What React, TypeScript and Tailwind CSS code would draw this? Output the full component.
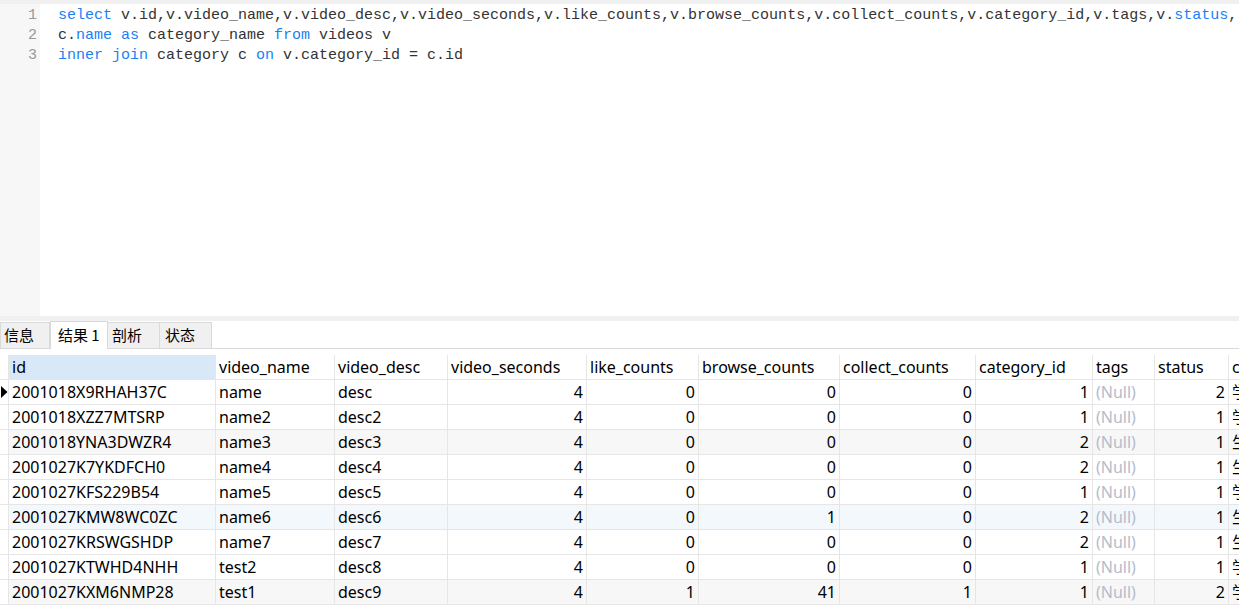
import React from 'react'

type Row = {
  id: string
  name: string
  desc: string
  seconds: number
  likes: number
  browse: number
  collect: number
  category: number
  status: number
  cname: string
  bg: string
}

const rows: Row[] = [
  { id: '2001018X9RHAH37C', name: 'name', desc: 'desc', seconds: 4, likes: 0, browse: 0, collect: 0, category: 1, status: 2, cname: '学习', bg: 'bg-white' },
  { id: '2001018XZZ7MTSRP', name: 'name2', desc: 'desc2', seconds: 4, likes: 0, browse: 0, collect: 0, category: 1, status: 1, cname: '学习', bg: 'bg-white' },
  { id: '2001018YNA3DWZR4', name: 'name3', desc: 'desc3', seconds: 4, likes: 0, browse: 0, collect: 0, category: 2, status: 1, cname: '生活', bg: 'bg-[#f7f7f7]' },
  { id: '2001027K7YKDFCH0', name: 'name4', desc: 'desc4', seconds: 4, likes: 0, browse: 0, collect: 0, category: 2, status: 1, cname: '生活', bg: 'bg-white' },
  { id: '2001027KFS229B54', name: 'name5', desc: 'desc5', seconds: 4, likes: 0, browse: 0, collect: 0, category: 1, status: 1, cname: '学习', bg: 'bg-white' },
  { id: '2001027KMW8WC0ZC', name: 'name6', desc: 'desc6', seconds: 4, likes: 0, browse: 1, collect: 0, category: 2, status: 1, cname: '生活', bg: 'bg-[#f3f8fd]' },
  { id: '2001027KRSWGSHDP', name: 'name7', desc: 'desc7', seconds: 4, likes: 0, browse: 0, collect: 0, category: 2, status: 1, cname: '生活', bg: 'bg-white' },
  { id: '2001027KTWHD4NHH', name: 'test2', desc: 'desc8', seconds: 4, likes: 0, browse: 0, collect: 0, category: 1, status: 1, cname: '学习', bg: 'bg-white' },
  { id: '2001027KXM6NMP28', name: 'test1', desc: 'desc9', seconds: 4, likes: 1, browse: 41, collect: 1, category: 1, status: 2, cname: '学习', bg: 'bg-[#f7f7f7]' },
]

const cell = 'h-full shrink-0 border-r border-[#e6e6e6] px-[3px] flex items-center overflow-hidden whitespace-nowrap'
const num = cell + ' justify-end'
const gutter = 'h-full w-[9px] shrink-0 border-r border-[#e6e6e6] flex items-center justify-start bg-white'

function Kw({ children }: { children: React.ReactNode }) {
  return <span className="text-[#1a7ff5]">{children}</span>
}

export default function App() {
  return (
    <div className="w-[1239px] h-[614px] overflow-hidden bg-white text-black">
      <div className="h-[4px] bg-[#f0f0f0]" />

      {/* editor */}
      <div className="h-[312px] flex font-['Liberation_Mono',monospace] text-[15px] leading-[20px]">
        <div className="w-[40px] shrink-0 bg-[#f7f7f7] pt-[2px] pr-[3px] text-right text-[#999]">
          <div>1</div>
          <div>2</div>
          <div>3</div>
        </div>
        <div className="flex-1 pt-[2px] pl-[18px] text-[#333] whitespace-pre overflow-hidden">
          <div>
            <Kw>select</Kw> v.id,v.video_name,v.video_desc,v.video_seconds,v.like_counts,v.browse_counts,v.collect_counts,v.category_id,v.tags,v.<Kw>status</Kw>,
          </div>
          <div>
            c.<Kw>name</Kw> <Kw>as</Kw> category_name <Kw>from</Kw> videos v
          </div>
          <div>
            <Kw>inner</Kw> <Kw>join</Kw> category c <Kw>on</Kw> v.category_id = c.id
          </div>
        </div>
      </div>

      <div className="h-[5px] bg-[#f0f0f0]" />

      {/* tabs */}
      <div className="h-[28px] flex items-end border-b border-[#d9d9d9] font-['Noto_Sans_CJK_SC',sans-serif] text-[15px]">
        <div className="h-[26px] w-[50px] bg-[#f0f0f0] border border-b-0 border-[#d9d9d9] flex items-center pl-[3px]">信息</div>
        <div className="h-[28px] w-[58px] bg-white border border-b-0 border-[#d9d9d9] flex items-center pl-[7px] -mb-px">结果 1</div>
        <div className="h-[26px] w-[52px] bg-[#f0f0f0] border border-b-0 border-l-0 border-[#d9d9d9] flex items-center pl-[4px]">剖析</div>
        <div className="h-[26px] w-[52px] bg-[#f0f0f0] border border-b-0 border-l-0 border-[#d9d9d9] flex items-center pl-[5px]">状态</div>
      </div>

      <div className="h-[6px]" />

      {/* grid */}
      <div className="font-['Noto_Sans','Noto_Sans_CJK_SC',sans-serif] text-[16px]">
        <div className="h-[25px] flex border-b border-[#e6e6e6]">
          <div className={gutter} />
          <div className={cell + ' w-[207px] bg-[#d9e8f6]'}>id</div>
          <div className={cell + ' w-[119px]'}>video_name</div>
          <div className={cell + ' w-[113px]'}>video_desc</div>
          <div className={cell + ' w-[139px]'}>video_seconds</div>
          <div className={cell + ' w-[112px]'}>like_counts</div>
          <div className={cell + ' w-[141px]'}>browse_counts</div>
          <div className={cell + ' w-[136px]'}>collect_counts</div>
          <div className={cell + ' w-[117px]'}>category_id</div>
          <div className={cell + ' w-[62px]'}>tags</div>
          <div className={cell + ' w-[74px]'}>status</div>
          <div className={cell + ' w-[120px]'}>category_name</div>
        </div>
        {rows.map((r, i) => (
          <div key={r.id} className={'h-[25px] flex border-b border-[#e6e6e6] ' + r.bg}>
            <div className={gutter}>
              {i === 0 && (
                <svg width="7" height="12" viewBox="0 0 7 12" className="ml-[1px] shrink-0">
                  <path d="M0 0 L6.5 6 L0 12 Z" fill="#000" />
                </svg>
              )}
            </div>
            <div className={cell + ' w-[207px]'}>{r.id}</div>
            <div className={cell + ' w-[119px]'}>{r.name}</div>
            <div className={cell + ' w-[113px]'}>{r.desc}</div>
            <div className={num + ' w-[139px]'}>{r.seconds}</div>
            <div className={num + ' w-[112px]'}>{r.likes}</div>
            <div className={num + ' w-[141px]'}>{r.browse}</div>
            <div className={num + ' w-[136px]'}>{r.collect}</div>
            <div className={num + ' w-[117px]'}>{r.category}</div>
            <div className={cell + ' w-[62px] text-[#b4bccb]'}>(Null)</div>
            <div className={num + ' w-[74px]'}>{r.status}</div>
            <div className={cell + ' w-[120px]'}>{r.cname}</div>
          </div>
        ))}
      </div>
    </div>
  )
}
